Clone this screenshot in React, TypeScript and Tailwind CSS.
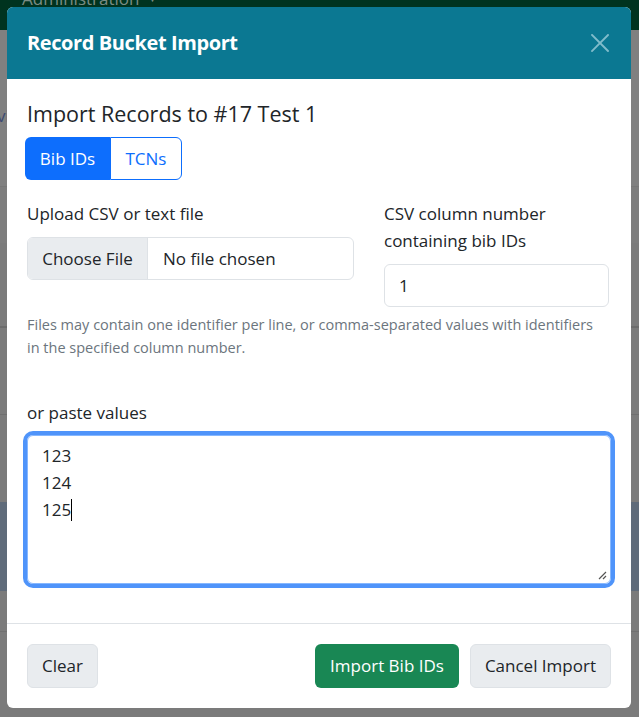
import React from "react";

export default function App() {
  return (
    <div className="relative w-[639px] h-[717px] overflow-hidden bg-[#7f7f7f] font-['Open_Sans',sans-serif]">
      {/* dimmed page behind the modal */}
      <div className="flex flex-col">
        <div className="h-[30px] bg-[#00331f] overflow-hidden">
          <div className="-mt-[15px] pl-[22px] text-[17px] leading-[27px] text-[#7b8c84] flex items-center gap-[8px]">
            <span>Administration</span>
            <span className="text-[10px]">▼</span>
          </div>
        </div>
        <div className="h-[156px] bg-[#808080] pt-[72px]">
          <div className="-ml-[3px] text-[17px] leading-[27px] text-[#3c4a73]">vi</div>
        </div>
        <div className="h-[57px] bg-[#7d7d7d] border-t border-[#777777]" />
        <div className="h-[83px] bg-[#7b7b7b]" />
        <div className="h-[88px] bg-[#7b7b7b] border-t-2 border-[#6c6c6c]" />
        <div className="h-[88px] bg-[#7b7b7b] border-t border-[#6f6f6f]" />
        <div className="h-[89px] bg-[#5f6b7a]" />
        <div className="h-[40px] bg-[#7b7b7b]" />
        <div className="h-[86px] bg-[#7b7b7b] border-t border-[#707070]" />
      </div>

      {/* modal */}
      <div className="absolute left-[7px] top-[7px] w-[624px] rounded-[6px] overflow-hidden bg-white flex flex-col text-[#212529]">
        <div className="h-[72px] bg-[#0b7892] pl-[20px] pr-[22px] flex items-center justify-between">
          <div className="text-[20px] font-bold tracking-[-0.4px] text-white leading-[28px]">Record Bucket Import</div>
          <svg width="18" height="18" viewBox="0 0 18 18" className="block">
            <path d="M1 1 L17 17 M17 1 L1 17" stroke="#80bccb" strokeWidth="1.9" strokeLinecap="square" />
          </svg>
        </div>

        <div className="px-[20px] pt-[22px] pb-[39px] flex flex-col">
          <div className="text-[21.5px] font-medium leading-[26px]">Import Records to #17 Test 1</div>
          <div className="mt-[10px] -ml-[2px] flex h-[43px] text-[17px]">
            <div className="w-[85px] bg-[#0d6efd] text-white rounded-l-[6px] flex items-center justify-center">Bib IDs</div>
            <div className="w-[72px] bg-white text-[#0d6efd] border border-[#0d6efd] rounded-r-[6px] flex items-center justify-center">TCNs</div>
          </div>

          <div className="mt-[20px] flex gap-[30px] text-[17px] leading-[27px]">
            <div className="w-[327px] flex flex-col">
              <div className="mb-[10px]">Upload CSV or text file</div>
              <div className="h-[43px] border border-[#dee2e6] rounded-[6px] flex overflow-hidden">
                <div className="w-[120px] bg-[#e9ecef] border-r border-[#dee2e6] flex items-center justify-center">Choose File</div>
                <div className="pl-[15px] flex items-center">No file chosen</div>
              </div>
            </div>
            <div className="w-[225px] flex flex-col">
              <div className="mb-[10px]">CSV column number containing bib IDs</div>
              <div className="h-[43px] border border-[#dee2e6] rounded-[6px] px-[14px] flex items-center">1</div>
            </div>
          </div>

          <div className="mt-[6px] text-[14.5px] leading-[23px] text-[#6c757d]">
            Files may contain one identifier per line, or comma-separated values with identifiers
            <br />
            in the specified column number.
          </div>

          <div className="mt-[40px] mb-[9px] text-[17px] leading-[27px]">or paste values</div>
          <div className="relative h-[149px] border border-[#86b7fe] rounded-[6px] ring-4 ring-[#4f94fa] px-[14px] py-[6px] text-[17px] leading-[27px]">
            <div>123</div>
            <div>124</div>
            <div className="flex items-center">
              <span>125</span>
              <span className="inline-block w-px h-[22px] bg-black" />
            </div>
            <svg width="10" height="10" viewBox="0 0 10 10" className="absolute right-[3px] bottom-[3px]">
              <path d="M9 2 L2 9 M9 6 L6 9" stroke="#555" strokeWidth="1.2" />
            </svg>
          </div>
        </div>

        <div className="border-t border-[#dee2e6] px-[20px] py-[20px] flex justify-between text-[17px]">
          <div className="h-[44px] px-[14px] rounded-[6px] bg-[#e9ecef] border border-[#dee2e6] flex items-center">Clear</div>
          <div className="flex gap-[11px]">
            <div className="h-[44px] px-[15px] rounded-[6px] bg-[#198754] text-white flex items-center">Import Bib IDs</div>
            <div className="h-[44px] px-[14px] rounded-[6px] bg-[#e9ecef] border border-[#dee2e6] flex items-center">Cancel Import</div>
          </div>
        </div>
      </div>
    </div>
  );
}
